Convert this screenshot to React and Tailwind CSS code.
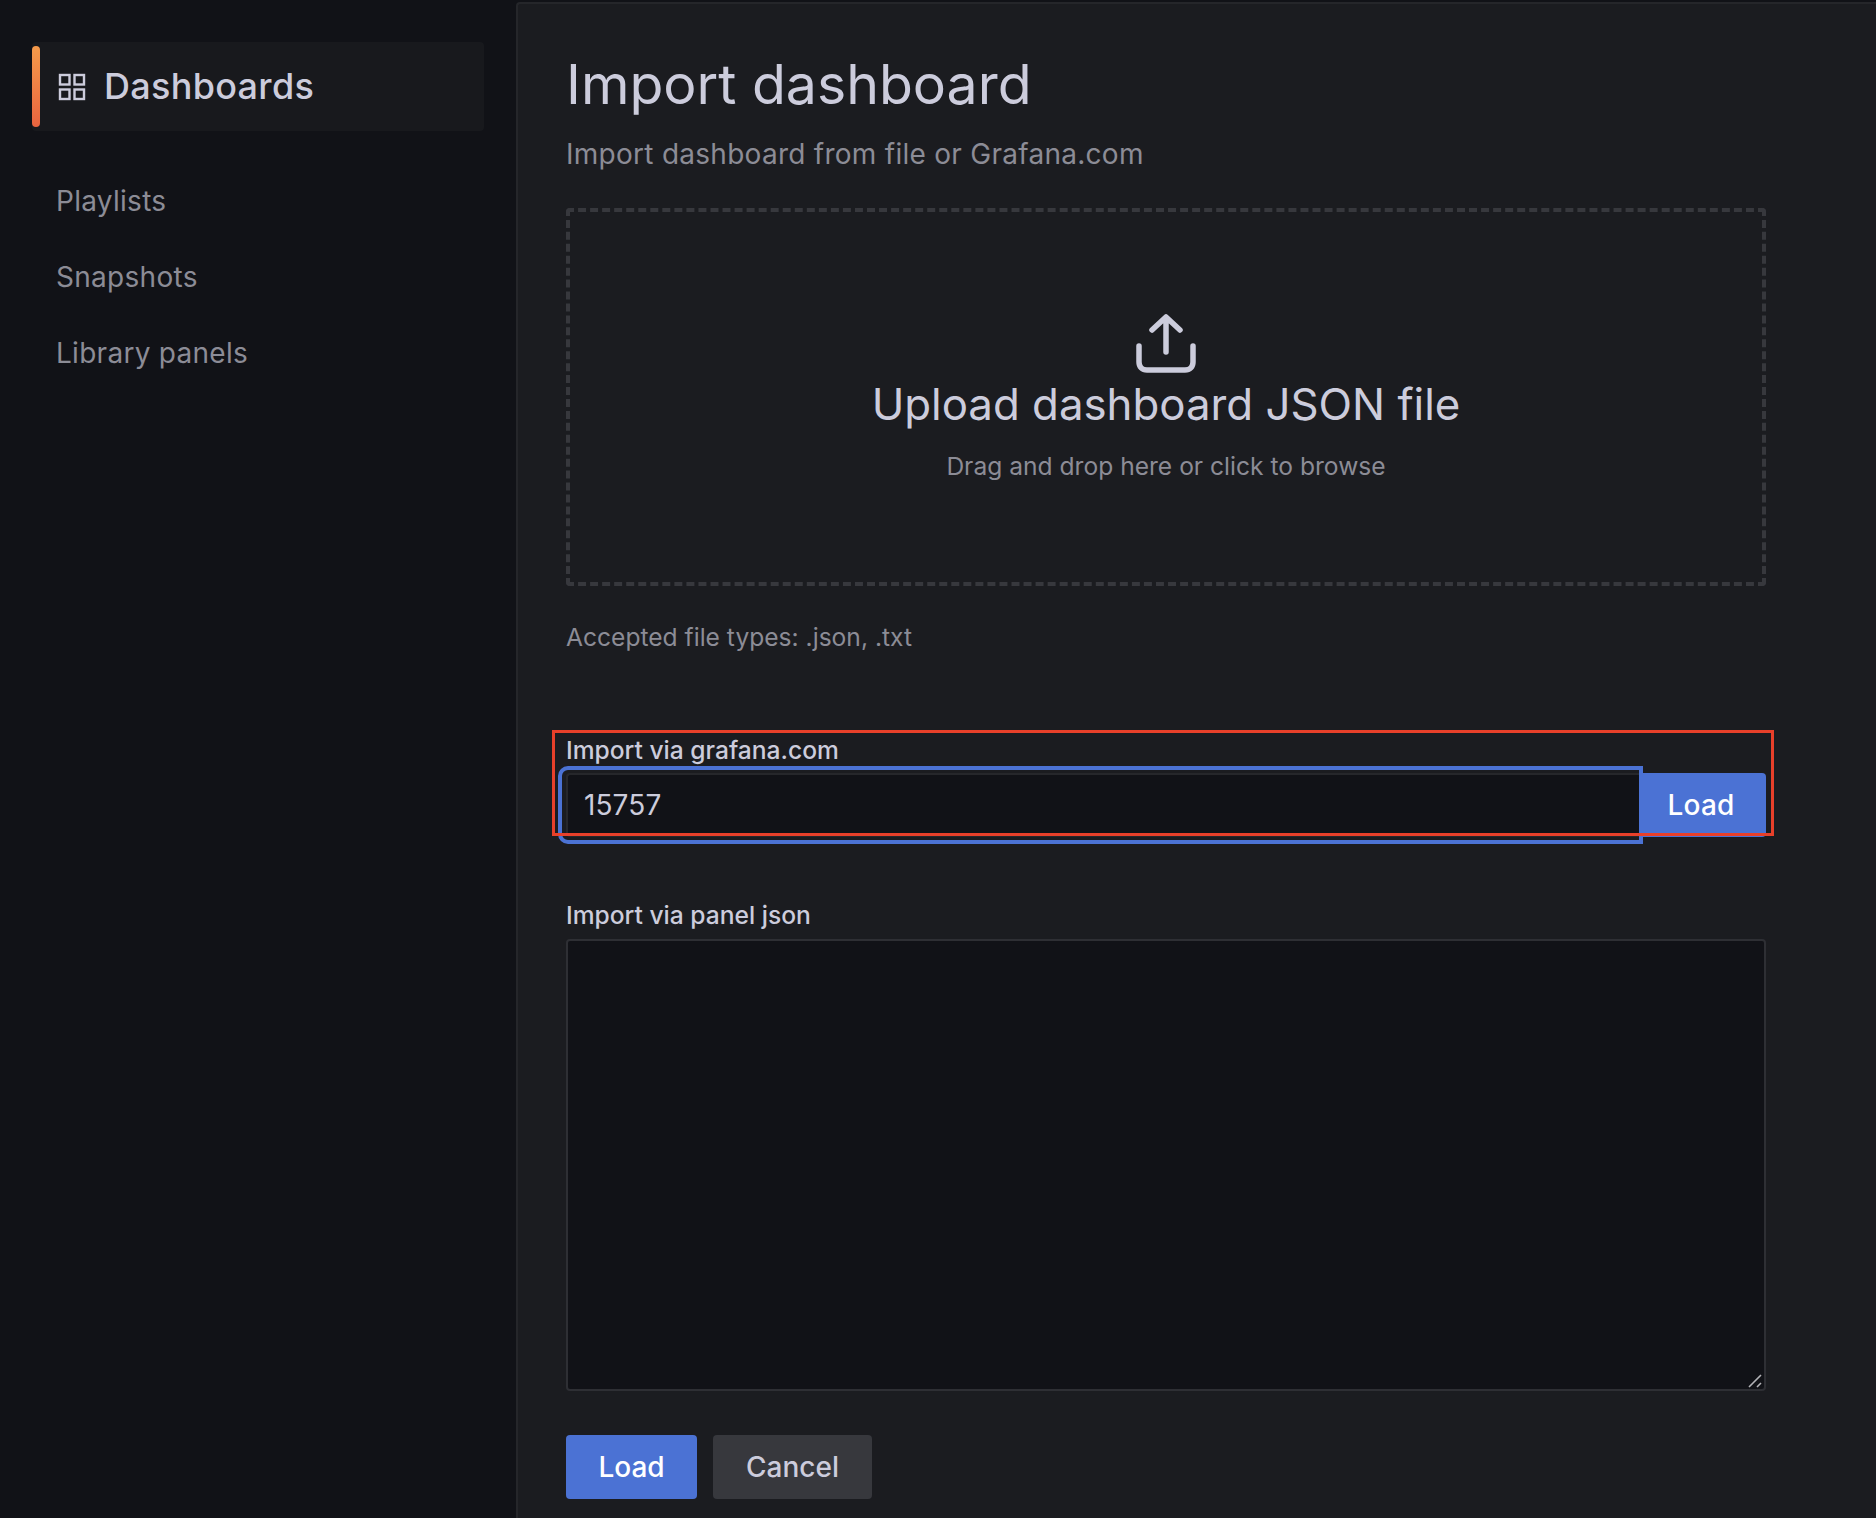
const font = { fontFamily: "Inter, 'Noto Sans', sans-serif" };

function DashboardsIcon() {
  return (
    <svg width="28" height="28" viewBox="0 0 28 28" fill="none" stroke="#ccccdc" strokeWidth="2.4" className="shrink-0">
      <rect x="2" y="2" width="9.5" height="9.5" />
      <rect x="16.5" y="2" width="9.5" height="9.5" />
      <rect x="2" y="16.5" width="9.5" height="9.5" />
      <rect x="16.5" y="16.5" width="9.5" height="9.5" />
    </svg>
  );
}

function UploadIcon() {
  return (
    <svg width="60" height="60" viewBox="0 0 60 60" fill="none" stroke="#ccccdc" strokeWidth="5.5" strokeLinecap="round" strokeLinejoin="round" className="shrink-0">
      <path d="M30 38V4M16 16L30 3L44 16" />
      <path d="M3 32V48C3 53 6 56 11 56H49C54 56 57 53 57 48V32" />
    </svg>
  );
}

function Sidebar() {
  return (
    <aside className="w-[516px] shrink-0 pt-[42px] pl-[32px] pr-[32px]">
      <div className="relative flex h-[89px] items-center rounded bg-[#18191d] pl-[26px]">
        <span className="absolute left-0 top-[4px] h-[81px] w-[8px] rounded-full bg-linear-to-b from-[#f59a4a] to-[#e8633f]" />
        <DashboardsIcon />
        <span className="ml-[18px] mb-[2px] text-[36px] font-medium tracking-[0.3px] text-[#ccccdc]">Dashboards</span>
      </div>
      <nav className="mt-[32px] flex flex-col pl-[24px] text-[28px] tracking-[0.28px] text-[#8c8c96]">
        <a className="flex h-[76px] items-center">Playlists</a>
        <a className="flex h-[76px] items-center">Snapshots</a>
        <a className="flex h-[76px] items-center">Library panels</a>
      </nav>
    </aside>
  );
}

function ImportForm() {
  return (
    <div className="relative mt-[48px]">
      {/* red annotation around the grafana.com row */}
      <div className="pointer-events-none absolute -left-[14px] -right-[8px] top-[-3px] z-20 h-[106px] border-[3px] border-[#e8402a]" />
      <label className="block text-[24.6px] font-medium leading-[34px] text-[#ccccdc]">Import via grafana.com</label>
      <div className="relative mt-[6px] flex h-[64px]">
        <div className="pointer-events-none absolute -left-[8px] -top-[7px] z-10 h-[78px] w-[1085px] rounded-l-[10px] border-[4px] border-[#4b72d4]" />
        <input
          readOnly
          value="15757"
          className="h-full w-[1073px] rounded-l border-y-2 border-l-2 border-[#26272b] bg-[#111217] px-[16px] text-[28px] tracking-[0.1px] text-[#ccccdc] outline-none"
        />
        <button className="h-full w-[127px] rounded-r bg-[#4b72d4] pr-[3px] text-[28px] font-medium tracking-[0.2px] text-white">Load</button>
      </div>
    </div>
  );
}

export default function App() {
  return (
    <div className="flex h-[1518px] overflow-hidden bg-[#111217]" style={font}>
      <Sidebar />
      <main className="mt-[2px] flex-1 rounded-tl border-l-2 border-t-2 border-[#25262a] bg-[#1b1c20] pl-[48px] pr-[110px]">
        <h1 className="mt-[44px] text-[55.4px] font-normal leading-[72px] text-[#ccccdc]">Import dashboard</h1>
        <p className="mt-[14px] text-[28px] leading-[40px] tracking-[0.27px] text-[#8c8c96]">Import dashboard from file or Grafana.com</p>
        <div className="mt-[34px] flex h-[378px] flex-col items-center rounded border-4 border-dashed border-[#37383d] pt-[102px]">
          <UploadIcon />
          <div className="mt-[1px] text-[43.8px] leading-[60px] text-[#ccccdc]">Upload dashboard JSON file</div>
          <div className="mt-[14px] text-[24.6px] leading-[34px] text-[#8c8c96]">Drag and drop here or click to browse</div>
        </div>
        <p className="mt-[34px] text-[24.6px] leading-[34px] text-[#8c8c96]">Accepted file types: .json, .txt</p>
        <div className="mt-[79px]">
          <ImportForm />
        </div>
        <label className="mt-[61px] block text-[24.6px] font-medium leading-[34px] text-[#ccccdc]">Import via panel json</label>
        <div className="relative mt-[7px] h-[452px] w-[1200px]">
          <textarea
            readOnly
            className="block h-full w-full resize-none rounded border-2 border-[#2e2f34] bg-[#111217] outline-none"
          />
          <svg width="16" height="16" viewBox="0 0 16 16" stroke="#b4b4b8" strokeWidth="1.6" className="pointer-events-none absolute bottom-[2px] right-[2px]">
            <path d="M1 14L13 2M9 14L13 10" />
          </svg>
        </div>
        <div className="mt-[44px] flex gap-[16px]">
          <button className="h-[64px] w-[131px] rounded bg-[#4b72d4] text-[28px] font-medium text-white">Load</button>
          <button className="h-[64px] w-[159px] rounded bg-[#37383d] text-[28px] font-medium text-[#ccccdc]">Cancel</button>
        </div>
      </main>
    </div>
  );
}
